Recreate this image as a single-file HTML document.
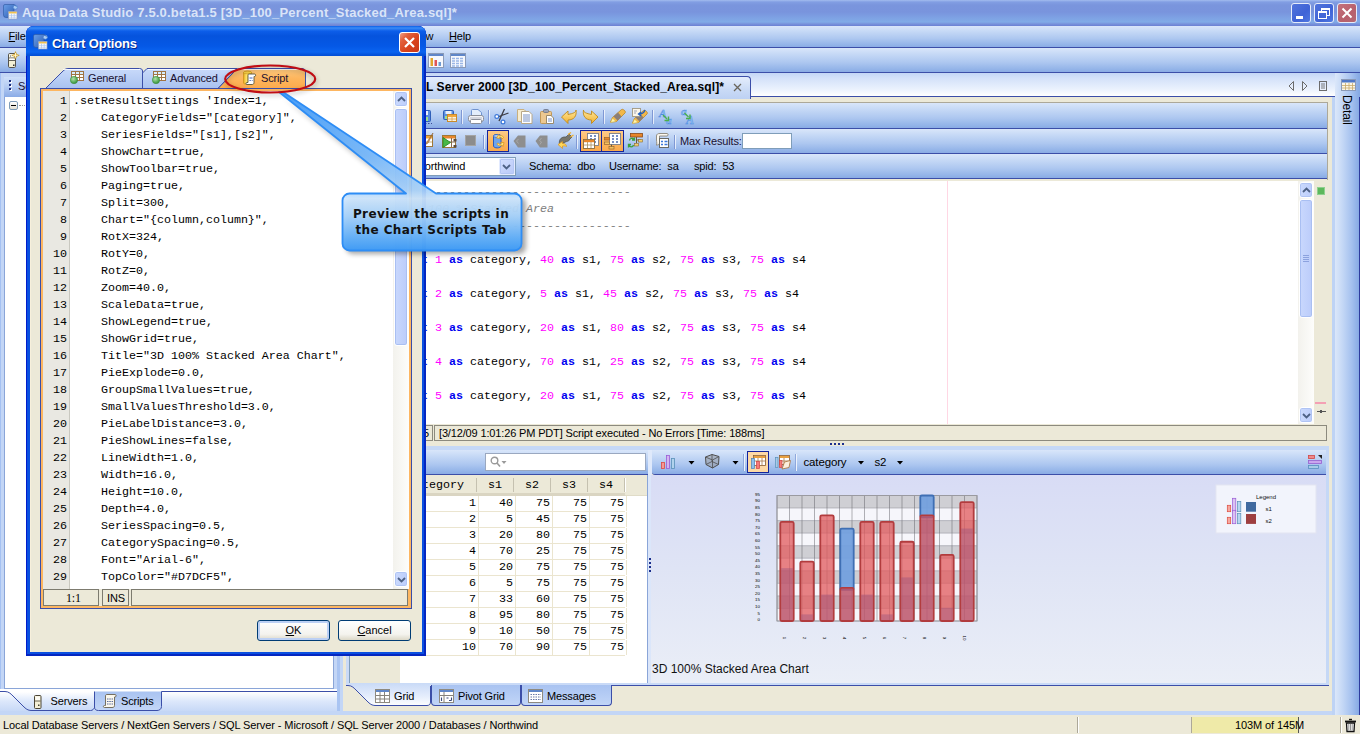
<!DOCTYPE html>
<html lang="en"><head><meta charset="utf-8"><title>Aqua Data Studio</title>
<style>
html,body{margin:0;padding:0}
body{width:1360px;height:734px;overflow:hidden;position:relative;background:#ece9d8;font-family:"Liberation Sans",sans-serif;font-size:11px;color:#000}
div,span,svg,b,i,u{position:absolute;box-sizing:border-box}
b.kw,span.nu,span.cm,.sl b,.sl span,.cl span{position:static}
u{position:static;text-decoration:underline}
.tb{background:linear-gradient(to bottom,#d9e6fa 0%,#c6d9f6 25%,#adc7f0 60%,#92b3e8 90%,#8aabe4 100%)}
.t{white-space:nowrap;line-height:14px;font-size:11px;letter-spacing:-0.15px}

/* title bar */
#title{left:0;top:0;width:1360px;height:26px;background:linear-gradient(to bottom,#a3bcee 0,#829ee3 2px,#7a95dd 5px,#7994dd 12px,#7ea2e4 18px,#80abe7 22px,#7892db 24px,#6b80d3 26px)}
#title .txt{left:22px;top:5px;font-weight:bold;font-size:13px;line-height:16px;color:#d9e4f8;white-space:nowrap;letter-spacing:0.19px}
.cap{top:3px;width:20px;height:20px;border-radius:3px;border:1px solid #e6ecfa}
#menubar{left:0;top:26px;width:1360px;height:22px;border-bottom:1px solid #3b4ea8}
#toolbar{left:0;top:48px;width:1360px;height:25px;border-bottom:1px solid #3b4ea8}
#work{left:0;top:73px;width:1360px;height:642px;background:#c3d6f6}

/* left panel */
#lphead{left:4px;top:77px;width:330px;height:20px;background:linear-gradient(to bottom,#cfe0fa,#b3caf2 50%,#8aabe6)}
#lpbody{left:4px;top:97px;width:330px;height:592px;background:#fff;border:1px solid #8aa5d8;border-top:none}
#lptabs{left:0;top:689px;width:337px;height:26px;background:linear-gradient(to bottom,#fff 0,#fff 3px,#dde8fb 12px,#c3d6f6 24px)}

/* right panel */
#rp{left:343px;top:73px;width:989px;height:638px;background:#ece9d8}
#rptabs{left:343px;top:73px;width:992px;height:24px;background:linear-gradient(to bottom,#c3d6f6 0,#d3e1f9 5px,#eaf1fd 16px,#fff 23px);border-bottom:1px solid #3b4ea8}
#rptab{left:343px;top:76px;width:408px;height:23px;background:linear-gradient(to bottom,#e4edfc,#c9daf6 60%,#bdd1f3);border:1px solid #3b4ea8;border-bottom:none;border-left:none;border-radius:0 4px 0 0}
#rptab .txt{right:26px;top:3px;font-weight:bold;font-size:12px;line-height:15px;white-space:nowrap;letter-spacing:0.1px}
.etb{left:346px;width:981px;height:25px;border-bottom:1px solid #3b4ea8}
#editor{left:346px;top:181px;width:952px;height:243px;background:#fff}
#sqltext{left:0;top:0;width:1299px;height:424px;overflow:hidden}
.sl{left:386px;height:17px;line-height:17px;font-family:"Liberation Mono",monospace;font-size:11.67px;white-space:pre;color:#000}
.kw{color:#0000f0;font-weight:bold}
.nu{color:#ff00ff}
.cm{color:#808080}
.ci{font-style:italic}
.vsb{width:16px;background:#f4f3ee}
.sbtn{left:1px;width:14px;height:16px;border:1px solid #fff;border-radius:3px;background:linear-gradient(to right,#cbdafd,#bccdfb);box-shadow:inset 0 0 0 1px #b0c4f4}
.thumb{left:1px;width:14px;border:1px solid #fff;border-radius:3px;background:linear-gradient(to right,#c9d8fd,#bbccfa);box-shadow:inset 0 0 0 1px #a9bff2}
#estat{left:346px;top:425px;width:981px;height:16px;background:#ece9d8}
.sbox{top:0;height:16px;border:1px solid #8c8a7e;background:#ece9d8}

/* results */
#rtb{left:346px;top:450px;width:302px;height:25px;border-bottom:1px solid #3b4ea8}
#gridwrap{left:349px;top:475px;width:299px;height:208px;background:#fff;border-right:1px solid #8aa5d8}
#grid{left:400px;top:475px;width:247px;height:208px;background:#fff;overflow:hidden}
.gh{top:0;height:21px;background:#ece9d8;border-bottom:3px solid #dad5c2}
.gh:after{content:'';position:absolute;right:0;top:3px;width:1px;height:14px;background:#c5c1b0;box-shadow:1px 0 0 #fff}
.gh span{top:3px;font-family:"Liberation Mono",monospace;font-size:11.67px;line-height:15px}
.gr{left:0;height:16px;width:225px;border-bottom:1px solid #ebe5cf}
.gc{top:0;height:15px;text-align:right;padding-right:2px;font-family:"Liberation Mono",monospace;font-size:11.67px;line-height:15px;border-right:1px solid #ebe5cf;box-sizing:content-box}
#ctb{left:652px;top:450px;width:674px;height:25px;border-radius:0 0 0 3px;border-bottom:1px solid #3b4ea8}
#chartbg{left:651px;top:475px;width:675px;height:208px;background:linear-gradient(to bottom,#d8dcf5,#dfe4f5 45%,#eaeef7)}
#chart{left:651px;top:475px}
#chart text{font-family:"Liberation Sans",sans-serif}
.ax{font-size:4.4px;fill:#000}
.lg{font-size:6px;fill:#111}
.ct{font-size:12px;fill:#111}
.obtn{border:1px solid #1a2c9c;background:#fdd9a6}

/* bottom tabs */
.btab{height:21px;border:1px solid #3b4ea8;border-top:none;border-radius:0 0 4px 4px;background:linear-gradient(to bottom,#a9c3f1,#c1d5f7)}

/* status */
#status{left:0;top:715px;width:1360px;height:19px;background:#ece9d8}
#status .txt{left:3px;top:3px;font-size:11px;line-height:14px;white-space:nowrap;letter-spacing:-0.1px}

/* dialog */
#dlg{left:26px;top:26px;width:400px;height:630px;border-radius:8px 8px 0 0;background:#0a4fe0;box-shadow:inset 1px 0 0 #001ccc,inset -2px 0 0 #0426c0,inset 0 -2px 0 #0426c0}
#dlgtitle{left:0;top:0;width:400px;height:30px;border-radius:8px 8px 0 0;background:linear-gradient(to bottom,#0a5fe8 0,#3a8cf6 2px,#0d5ee9 5px,#0553dd 10px,#0558e6 20px,#0a64f0 26px,#0350d8 29px)}
#dlgtitle .txt{left:26px;top:9.500px;letter-spacing:-0.13px;font-weight:bold;font-size:13px;line-height:16px;color:#fff;text-shadow:1px 1px 0 #0a2a8c;white-space:nowrap}
#dlgbody{left:4px;top:30px;width:392px;height:596px;background:#ece9d8;border-left:1px solid #f7f0dc}
#dlgcode{left:0;top:0;width:393px;height:589px;overflow:hidden}
.ln{left:43px;width:24px;height:17px;line-height:17px;text-align:right;font-family:"Liberation Mono",monospace;font-size:11.67px;color:#000}
.cl{left:73px;height:17px;line-height:17px;font-family:"Liberation Mono",monospace;font-size:11.67px;white-space:pre;color:#000}
.xbtn{width:73px;height:21px;border:1px solid #003c74;border-radius:3px;background:linear-gradient(to bottom,#fff,#f4f3ee 70%,#dcd8c8);text-align:center;line-height:18px;font-size:11px}

</style></head>
<body>
<!-- ===== main window title ===== -->
<div id="title">
  <svg style="left:3px;top:3px" width="17" height="17" viewBox="0 0 17 17">
      <defs><linearGradient id="ib1" x1="0" y1="0" x2="1" y2="1"><stop offset="0" stop-color="#6a9ee8"/><stop offset="1" stop-color="#2f5fb4"/></linearGradient></defs>
      <path d="M0.500 3Q0.500 1.500 2 1.500H11V9H5.500V14.500H3Q0.500 14.500 0.500 12Z" fill="url(#ib1)" stroke="#2c569f" stroke-width="0.600"/>
      <circle cx="12.300" cy="4.200" r="2.100" fill="#a9cdf6" stroke="#4a7fd0" stroke-width="0.700"/><path d="M11 1.600L13.500 3.500" stroke="#2f5fb4" stroke-width="0.800"/>
      <rect x="5.500" y="8.500" width="8.500" height="7.500" fill="#fff" stroke="#8c9cc0" stroke-width="0.700"/>
      <rect x="5.800" y="8.800" width="7.900" height="1.700" fill="#f2c24e"/>
      <path d="M5.800 12.300H13.700M5.800 14.200H13.700M8.500 10.500V15.700M11.200 10.500V15.700" stroke="#a9c4ec" stroke-width="0.700"/>
    </svg>
  <div class="txt">Aqua Data Studio 7.5.0.beta1.5 [3D_100_Percent_Stacked_Area.sql]*</div>
  <div class="cap" style="left:1291px;background:linear-gradient(135deg,#5274dc,#3f63d6 60%,#4f78e2)"><div style="left:4px;top:12px;width:7px;height:3px;background:#fff"></div></div>
  <div class="cap" style="left:1314px;background:linear-gradient(135deg,#5274dc,#3f63d6 60%,#4f78e2)">
    <div style="left:6px;top:4px;width:9px;height:8px;border:1px solid #fff;border-top-width:2px"></div>
    <div style="left:3px;top:7px;width:9px;height:8px;border:1px solid #fff;border-top-width:2px;background:#4468d8"></div>
  </div>
  <div class="cap" style="left:1337px;background:linear-gradient(135deg,#c4727c,#b8606c 60%,#b46874)">
    <svg style="left:3px;top:3px" width="12" height="12" viewBox="0 0 12 12"><path d="M1.5 1.5L10.5 10.5M10.5 1.5L1.5 10.5" stroke="#fff" stroke-width="2"/></svg>
  </div>
</div>

<!-- ===== menu bar ===== -->
<div id="menubar" class="tb">
  <div class="t" style="left:8.500px;top:3px"><u>F</u>ile</div>
  <div class="t" style="left:395px;top:3px"><u>W</u>indow</div>
  <div class="t" style="left:449px;top:3px"><u>H</u>elp</div>
</div>

<!-- ===== main toolbar ===== -->
<div id="toolbar" class="tb">
  <svg style="left:7px;top:3px" width="16" height="18" viewBox="0 0 16 18">
    <rect x="1.500" y="2.500" width="7" height="14" rx="1.200" fill="#f3f0d4" stroke="#55534c"/>
    <rect x="2.500" y="3.500" width="5" height="3" fill="#fbfaf0"/><path d="M2 7H8M2 9.500H8" stroke="#55534c" stroke-width="0.900"/><rect x="2.500" y="7.500" width="5" height="1.500" fill="#fff"/><rect x="6" y="13.500" width="1.500" height="1.500" fill="#333"/><rect x="3" y="4.500" width="1" height="1" fill="#555"/>
    <path d="M8.500 0.500L9.600 3.200L12.300 4.300L9.600 5.400L8.500 8.100L7.400 5.400L4.700 4.300L7.400 3.200Z" fill="#d9a520" stroke="#b8860b" stroke-width="0.400"/><path d="M8.500 2V6.600M6.200 4.300H10.800" stroke="#fff8d8" stroke-width="0.900"/>
  </svg>
  <svg style="left:428px;top:5px" width="16" height="15" viewBox="0 0 16 15">
    <rect x="0.5" y="0.5" width="15" height="14" fill="#f6f8fd" stroke="#8a9ab8"/><rect x="1" y="1" width="14" height="2" fill="#5f86c8"/>
    <rect x="2.5" y="5" width="2.5" height="8" fill="#e2a52e"/><rect x="6.5" y="7" width="2.5" height="6" fill="#e05656"/><rect x="10.5" y="9" width="2.5" height="4" fill="#6f9bd2"/>
  </svg>
  <svg style="left:450px;top:5px" width="16" height="15" viewBox="0 0 16 15">
    <rect x="0.5" y="0.5" width="15" height="14" fill="#f6f8fd" stroke="#8a9ab8"/><rect x="1" y="1" width="14" height="2" fill="#5f86c8"/>
    <path d="M2 5.5H14M2 8H14M2 10.5H14M2 13H14" stroke="#9bb6e6" stroke-width="1.4" stroke-dasharray="3 1"/>
  </svg>
</div>

<div id="work"></div>
<div style="left:0;top:73px;width:1px;height:642px;background:#a5c1f2"></div>

<!-- ===== left panel ===== -->
<div id="lphead">
  <div style="left:5px;top:3px;width:2px;height:2px;background:#1c2e7c;box-shadow:0 4px 0 #1c2e7c,0 8px 0 #1c2e7c,1px 1px 0 #fff,1px 5px 0 #fff,1px 9px 0 #fff"></div>
  <div class="t" style="left:14px;top:2px;color:#1a1030">Servers</div>
</div>
<div id="lpbody">
  <div style="left:4px;top:4px;width:9px;height:9px;border:1px solid #7f9db9;border-radius:2px;background:linear-gradient(to bottom,#fff,#e4dfd2)"><div style="left:1px;top:3px;width:5px;height:1px;background:#000"></div></div>
  <div style="left:14px;top:8px;width:6px;height:1px;border-top:1px dotted #999"></div>
</div>
<div id="lptabs">
  <svg style="left:0;top:0" width="337" height="26" viewBox="0 0 337 26">
    <path d="M94.500 2.500V18C94.500 20.500 96 21.500 98.500 21.500H157C159.500 21.500 161.500 20 161.500 17.500V2.500Z" fill="url(#stg)"/>
    <defs><linearGradient id="stg" x1="0" y1="0" x2="0" y2="1"><stop offset="0" stop-color="#a9c3f1"/><stop offset="1" stop-color="#c3d6f7"/></linearGradient></defs>
    <path d="M0 2.500H5C9 2.500 11 5 14 8L24 18C27 21 29 21.500 32 21.500H90.500C93 21.500 93.500 20 94.500 18.500" fill="none" stroke="#3b4ea8" stroke-width="1"/>
    <path d="M94.500 2.500V18C94.500 20.500 96 21.500 98.500 21.500H157C159.500 21.500 161.500 20 161.500 17.500V2.500H337" fill="none" stroke="#3b4ea8" stroke-width="1"/>
    <rect x="34.500" y="6.500" width="6.500" height="13" rx="1" fill="#f4efd6" stroke="#4a4434"/><rect x="35.500" y="7.500" width="4.500" height="4" fill="#fdfcf4"/><path d="M35 12H40.500" stroke="#4a4434" stroke-width="0.800"/><rect x="38" y="15.500" width="1.500" height="1.500" fill="#443"/>
    <path d="M105.500 7C105.500 6 106 5.500 107 5.500H115C116.500 5.500 116.500 8 115 8H114.500V16.500C114.500 18 113.500 18.500 112 18.500H104.500C103 18.500 103 16.500 104.500 16.500H105.500Z" fill="#fbf8ee" stroke="#6a6250" stroke-width="0.900"/><path d="M107 10H113M107 12.500H113M107 15H113" stroke="#5a6a9a" stroke-width="1" stroke-dasharray="1.500 0.800"/>
  </svg>
  <div class="t" style="left:50.500px;top:5px">Servers</div>
  <div class="t" style="left:121px;top:5px">Scripts</div>
</div>
<!-- splitter between panels -->
<div style="left:337px;top:73px;width:3px;height:642px;background:#a9c4f2"></div>

<!-- ===== right panel ===== -->
<div id="rp"></div>
<div style="left:343px;top:711px;width:1017px;height:4px;background:#c3d6f6"></div>
<div style="left:0;top:711px;width:343px;height:4px;background:#c3d6f6"></div>
<div id="rptabs">
  <svg style="left:944px;top:7px" width="40" height="12" viewBox="0 0 40 12">
    <path d="M6.500 1.500V10.500L2 6Z M15.500 1.500V10.500L20 6Z" fill="none" stroke="#6c6c6c" stroke-width="1"/>
    <rect x="32.500" y="1.500" width="7" height="9" fill="none" stroke="#6c6c6c"/><path d="M34 4H38M34 6H38M34 8H38" stroke="#6c6c6c" stroke-width="0.9"/>
  </svg>
</div>
<div id="rptab"><div class="txt">SQL Server 2000 [3D_100_Percent_Stacked_Area.sql]*</div>
  <svg style="left:390px;top:6px" width="9" height="9" viewBox="0 0 9 9"><path d="M1 1L8 8M8 1L1 8" stroke="#6a665c" stroke-width="1.3"/></svg>
</div>
<div style="left:343px;top:99px;width:989px;height:4px;background:#ece9d8"></div>
<div style="left:346px;top:102px;width:982px;height:1px;background:#aca899"></div>
<div style="left:1327px;top:102px;width:1px;height:78px;background:#aca899"></div>

<!-- detail side strip -->
<div style="left:1335px;top:73px;width:25px;height:642px;background:linear-gradient(to right,#dbe7fa 0,#c6d9f6 28%,#a6c2ef 65%,#87aae4 96%,#87aae4 100%)">
  <div style="left:24px;top:24px;width:1px;height:618px;background:#2e3c9e"></div>
  <svg style="left:6px;top:6px" width="15" height="12" viewBox="0 0 15 12"><rect x="0.5" y="0.5" width="14" height="11" fill="#fbf6e6" stroke="#8a9ab8"/><rect x="1" y="1" width="13" height="2.500" fill="#4f78c8"/><path d="M1 6.500H14M1 9H14M4.500 4V11M8 4V11M11.500 4V11" stroke="#c8aa6a" stroke-width="0.8"/></svg>
  <div class="t" style="left:19px;top:22px;transform:rotate(90deg);transform-origin:0 0;font-size:12px">Detail</div>
</div>
<div style="left:1332px;top:97px;width:3px;height:618px;background:#bed3f5"></div>

<!-- editor toolbars -->
<div class="etb tb" style="top:103px;height:26px"></div>
<div class="etb tb" style="top:129px"></div>
<div class="etb tb" style="top:154px"></div>
<svg style="left:410px;top:103px" width="300" height="51" viewBox="410 103 300 51">
  <defs>
    <linearGradient id="ob" x1="0" y1="0" x2="0" y2="1"><stop offset="0" stop-color="#fdcb8a"/><stop offset="0.5" stop-color="#fbb762"/><stop offset="1" stop-color="#faa94c"/></linearGradient>
    <linearGradient id="ya" x1="0" y1="0" x2="0" y2="1"><stop offset="0" stop-color="#ffe9a0"/><stop offset="1" stop-color="#f2b02c"/></linearGradient>
  </defs>
  <g stroke="#fff" stroke-opacity="0.7">
    <path d="M462.500 110V124M489.500 110V124M604.500 110V124M653.500 110V124M484.500 135V149M577.500 135V149M649 135V149M675.500 135V149"/>
  </g>
  <g stroke="#7f98d4">
    <path d="M461.500 110V124M488.500 110V124M603.500 110V124M652.500 110V124M483.500 135V149M576.500 135V149M648 135V149M674.500 135V149"/>
  </g>
  <!-- row 1 -->
  <rect x="418.500" y="110.500" width="12" height="11" rx="1" fill="#5a8ee0" stroke="#2f5fb8"/><rect x="421" y="111" width="7" height="4" fill="#e8f0fc"/><rect x="422" y="117" width="6" height="4" fill="#9fe08a"/>
  <path d="M419 123.500H432" stroke="#3a4a9a" stroke-dasharray="1.500 1.500"/>
  <rect x="443.500" y="110.500" width="10" height="9" rx="1" fill="#5a8ee0" stroke="#2f5fb8"/><rect x="445.500" y="111" width="6" height="3" fill="#e8f0fc"/><rect x="445" y="116" width="3" height="3" fill="#9fe08a"/>
  <rect x="447.500" y="114.500" width="9" height="7" fill="#fdf4dc" stroke="#c88a2c"/><rect x="448" y="115" width="8" height="2" fill="#f2a83a"/><path d="M448 119H456M452 117V121" stroke="#d8a050" stroke-width="0.8"/>
  <path d="M471.500 116V110.500C471.500 109.500 472 109.500 472.500 109.500H478L481.500 112.500V116Z" fill="#e3eefc" stroke="#6f93d0"/>
  <rect x="468.500" y="115.500" width="15" height="6" rx="2" fill="#f4f4f6" stroke="#8a8e98"/><rect x="470.500" y="119.500" width="11" height="4" rx="1" fill="#fff" stroke="#8a8e98"/><path d="M470 118H482" stroke="#b4b8c4"/>
  <path d="M504.500 109L499 121M508.500 113L497.500 117" stroke="#3c3c44" stroke-width="1.300" fill="none"/><circle cx="496.800" cy="116.500" r="1.900" fill="#fff" stroke="#3c78d8" stroke-width="1.200"/><circle cx="503" cy="122" r="1.900" fill="#fff" stroke="#3c78d8" stroke-width="1.200"/>
  <path d="M517.500 109.500H524L526.500 112V121.500H517.500Z" fill="#f6ecd0" stroke="#c8b080"/><path d="M521.500 111.500H529L532 114.500V123.500H521.500Z" fill="#fff" stroke="#b8a888"/><path d="M523 115H530M523 117H530M523 119H530M523 121H530" stroke="#6a86c0" stroke-width="0.9"/>
  <rect x="540.500" y="111.500" width="11" height="12" rx="1" fill="#ecc890" stroke="#c09858"/><rect x="543.500" y="109.500" width="5" height="3" rx="1" fill="#9aa2b4" stroke="#6a7286" stroke-width="0.8"/><path d="M546.500 115.500H551L553.500 118V123.500H546.500Z" fill="#fff" stroke="#9a8a6a"/><path d="M548 119H552M548 121H552" stroke="#6a86c0" stroke-width="0.9"/>
  <path d="M561.500 117L568 111V114.500C573 113.500 576 112.500 576 110C577 116 574 120 568 120V123.500Z" fill="url(#ya)" stroke="#c08a1c" stroke-width="0.9"/>
  <path d="M598 117L591.500 111V114.500C586.500 113.500 583.500 112.500 583.500 110C582.500 116 585.500 120 591.500 120V123.500Z" fill="url(#ya)" stroke="#c08a1c" stroke-width="0.9"/>
  <g><path d="M610.500 122L612.500 117.500L621.500 109.500C623 108.500 626.500 111.500 625 113L616.500 121.500Z" fill="#f2b84a" stroke="#b8862c" stroke-width="0.8"/><path d="M613.500 116.500L618 112.500L621.500 116.500L617.500 120.500Z" fill="#8a7e78"/><path d="M610.500 122.500L612.500 118L616 121.500Z" fill="#fff6b0" stroke="#d8b040" stroke-width="0.600"/></g>
  <g transform="translate(22,1)"><path d="M610.500 122L612.500 117.500L621.500 109.500C623 108.500 626.500 111.500 625 113L616.500 121.500Z" fill="#f2b84a" stroke="#b8862c" stroke-width="0.8"/><path d="M613.500 116.500L618 112.500L621.500 116.500L617.500 120.500Z" fill="#8a7e78"/><path d="M610.500 122.500L612.500 118L616 121.500Z" fill="#fff6b0" stroke="#d8b040" stroke-width="0.600"/></g><rect x="632.500" y="108.500" width="8" height="8" fill="#fbf6ea" stroke="#a09880" stroke-width="0.9"/><path d="M634 111H637M634 113H636" stroke="#8890a8" stroke-width="0.8"/><path d="M645 110C644 113 642 114 639 114M641 112L638.500 114L641 116" stroke="#1f5fc0" stroke-width="1.300" fill="none"/>
  <text x="659" y="117" font-size="11" font-style="italic" font-weight="bold" fill="#8cbcf4" stroke="#4a8ae0" stroke-width="0.400" font-family="Liberation Serif,serif">A</text><text x="666" y="124" font-size="11" font-style="italic" font-weight="bold" fill="#8cbcf4" stroke="#4a8ae0" stroke-width="0.400" font-family="Liberation Serif,serif">a</text><path d="M663 115L667 119M668.500 116.500V120.500H664.500" stroke="#4cb04c" stroke-width="1.400" fill="none"/>
  <text x="681" y="115" font-size="11" font-style="italic" font-weight="bold" fill="#8cbcf4" stroke="#4a8ae0" stroke-width="0.400" font-family="Liberation Serif,serif">a</text><text x="686" y="124" font-size="12" font-style="italic" font-weight="bold" fill="#8cbcf4" stroke="#4a8ae0" stroke-width="0.400" font-family="Liberation Serif,serif">A</text><path d="M684.500 113L688.500 117M690 114.500V118.500H686" stroke="#4cb04c" stroke-width="1.400" fill="none"/>
  <!-- row 2 -->
  <rect x="418.500" y="135.500" width="14" height="11" fill="#fff" stroke="#a07838"/><rect x="419" y="136" width="13" height="2.500" fill="#f2a83a"/><path d="M419 142H432M425.500 138V146" stroke="#c8a468" stroke-width="0.9"/><path d="M433 133L427 142L425.500 144.500L428 143Z" fill="#e8a860" stroke="#8a5a2a" stroke-width="0.600"/>
  <rect x="442.500" y="135.500" width="13" height="12" fill="#fff" stroke="#a07838"/><rect x="443" y="136" width="12" height="2.500" fill="#e8862a"/><path d="M449 142H456M451.500 138V147" stroke="#8a6a4a" stroke-width="1"/><rect x="453.500" y="139" width="3" height="2.500" fill="#5a4a3a"/><rect x="453.500" y="145" width="3" height="2.500" fill="#5a4a3a"/>
  <path d="M443 137.500L450.500 142.500L443 147.500Z" fill="#48b848" stroke="#2a8a2a" stroke-width="0.9"/>
  <rect x="465.500" y="135.500" width="10" height="10" fill="#8c8c8c" stroke="#a4a4a4"/>
  <rect x="487.500" y="130.500" width="21" height="21" fill="url(#ob)" stroke="#14249c"/>
  <path d="M493.500 136C493.500 134 501 134 501 136V146C501 148.500 493.500 148.500 493.500 146Z" fill="#6ea4ec" stroke="#2a5cc0"/><ellipse cx="497.200" cy="136" rx="3.700" ry="1.500" fill="#b4d2f8" stroke="#2a5cc0" stroke-width="0.700"/>
  <path d="M503.500 137.500C503 135.500 500.500 135 499 136L498.500 134.500L496.500 138L500 138.500L499.500 137.500C500.500 137 502 137.500 502 139Z M497 143.500C497.500 146 500.500 146.500 502 145L503 146.500L504 142.500L500.500 142.500L501.300 143.800C500 144.800 498.500 144 498.500 143Z" fill="#ffe27a" stroke="#d8921c" stroke-width="0.700"/>
  <path d="M513.500 141L518 135.500H525.500V147.500H518Z" fill="#8e8e8e"/><path d="M518.500 139L516.500 141L518.500 143.500" stroke="#a8a8a8" fill="none"/>
  <path d="M535.500 141L540 135.500H547.500V147.500H540Z" fill="#8e8e8e"/><path d="M541.500 138L539.500 140.500L541.500 142L540 144.500" stroke="#a8a8a8" fill="none"/>
  <path d="M559.500 144C558.500 139 562 136.500 566 137L569 134L572 137L569 140C569.500 141.500 566 141 564 143Z" fill="#77766c" stroke="#4a4a44" stroke-width="0.700"/><path d="M568 134.500L571 132.500M570.500 137L573.500 135" stroke="#f2b02c" stroke-width="1.400"/>
  <path d="M558 144.500L562.500 141.500V143.500C565 143.500 566.500 144.500 566.500 146.500C565.500 145.800 564 145.800 562.500 146V148.500Z" fill="#ffd85a" stroke="#d8921c" stroke-width="0.700"/>
  <rect x="580.500" y="130.500" width="21" height="21" fill="url(#ob)" stroke="#14249c"/><rect x="601.500" y="130.500" width="22" height="21" fill="url(#ob)" stroke="#14249c"/>
  <rect x="587.500" y="133.500" width="11" height="12" fill="#fff" stroke="#7a7e8c" stroke-width="0.9"/><path d="M590 136H592M594 136H596M590 139H592M594 139H596M590 142H592M594 142H596" stroke="#4a6ab0" stroke-width="1.300"/>
  <rect x="583.500" y="139.500" width="11" height="9" fill="#fff" stroke="#8a6a3a" stroke-width="0.9"/><rect x="584" y="140" width="10" height="2.200" fill="#e8862a"/><path d="M584 145H594M587.500 142V148M591 142V148" stroke="#a89060" stroke-width="0.800"/>
  <rect x="609.500" y="133.500" width="11" height="11" fill="#fff" stroke="#7a7e8c" stroke-width="0.9"/><path d="M612 136H614M616 136H618M612 139H614M616 139H618M612 142H614M616 142H618" stroke="#4a6ab0" stroke-width="1.300"/>
  <rect x="604.500" y="137.500" width="5" height="2.500" fill="#e8862a" stroke="#8a5a2a" stroke-width="0.600"/><rect x="604.500" y="142" width="5" height="2.500" fill="#f4c060" stroke="#8a5a2a" stroke-width="0.600"/><rect x="609" y="146.500" width="5" height="2.500" fill="#f4c060" stroke="#8a5a2a" stroke-width="0.600"/><path d="M611.500 144.500V146.500" stroke="#6a5a3a"/>
  <rect x="630.500" y="133.500" width="12" height="3.500" fill="#e8862a" stroke="#8a4a1a" stroke-width="0.800"/><path d="M636.500 137V143M636.500 140H641" stroke="#6a5a3a"/><rect x="638.500" y="139.500" width="4" height="2.500" fill="#f4d070" stroke="#8a6a2a" stroke-width="0.600"/><rect x="634.500" y="143.500" width="4" height="2.500" fill="#f4d070" stroke="#8a6a2a" stroke-width="0.600"/>
  <path d="M629.500 140.500C629.500 138 633 137.500 634 139.500M634.500 137.500V140H632M633.500 145C633 147.500 629.500 147.500 629 145M628.500 147.500V144.500H631" stroke="#3ea03e" stroke-width="1.300" fill="none"/>
  <path d="M656.500 136C656.500 134 658 133.500 660 133.500H667C668.500 133.500 668.500 136 667 136H659.500V143C659.500 144.500 658 145 656 145C657.500 144.500 656.500 142 656.500 140Z" fill="#fbf8f0" stroke="#8a8478" stroke-width="0.900"/>
  <rect x="659.500" y="138.500" width="9" height="9" fill="#fff" stroke="#6a6a64"/><path d="M661 141.500H663M664.500 141.500H667.500M661 144.500H663M664.500 144.500H667.500" stroke="#3c78d8" stroke-width="1.500"/>
</svg>
<div class="t" style="left:680px;top:134px;color:#1a1030">Max Results:</div>
<div style="left:742px;top:133px;width:50px;height:16px;background:#fff;border:1px solid #7f9db9"></div>
<div style="left:386px;top:157px;width:130px;height:19px;background:#fff;border:1px solid #7f9db9"></div>
<div class="t" style="left:417px;top:159px">Northwind</div>
<div style="left:499px;top:158px;width:16px;height:17px;border:1px solid #e2eaff;border-radius:2px;background:linear-gradient(135deg,#d2defe,#b9c9f8);box-shadow:inset 0 0 0 1px #b4c6f4"><svg style="left:1.500px;top:5px" width="9" height="6" viewBox="0 0 9 6"><path d="M1 1L4.500 4.500L8 1" stroke="#4d6185" stroke-width="1.800" fill="none"/></svg></div>
<div class="t" style="left:529px;top:159px;word-spacing:3px">Schema: dbo</div>
<div class="t" style="left:609px;top:159px;word-spacing:3px">Username: sa</div>
<div class="t" style="left:694px;top:159px;word-spacing:3px">spid: 53</div>
<div style="left:346px;top:179px;width:981px;height:2px;background:#ece9d8"></div>

<!-- editor -->
<div id="editor"></div>
<div style="left:947px;top:181px;width:1px;height:243px;background:#ffd7e4"></div>
<div class="vsb" style="left:1298px;top:181px;height:243px;background:linear-gradient(to right,#f3f2ed,#fdfdfb)">
  <div class="sbtn" style="top:1px"><svg style="left:1.500px;top:4px" width="9" height="6" viewBox="0 0 9 6"><path d="M1 5L4.500 1.500L8 5" stroke="#4d6185" stroke-width="1.800" fill="none"/></svg></div>
  <div class="thumb" style="top:18px;height:119px"><div style="left:3px;top:55px;width:6px;height:1px;background:#8ca2de;box-shadow:0 2px 0 #8ca2de,0 4px 0 #8ca2de,0 6px 0 #8ca2de"></div></div>
  <div class="sbtn" style="top:226px"><svg style="left:1.500px;top:5px" width="9" height="6" viewBox="0 0 9 6"><path d="M1 1L4.500 4.500L8 1" stroke="#4d6185" stroke-width="1.800" fill="none"/></svg></div>
</div>
<div style="left:1314px;top:181px;width:13px;height:243px;background:#ece9d8">
  <div style="left:3px;top:6px;width:8px;height:8px;background:#5cb85c;border:1px solid #8fd08f"></div>
  <div style="left:1px;top:221px;width:11px;height:2px;background:#f4a0b4"></div>
  <div style="left:3px;top:230px;width:9px;height:1px;background:#555"></div><div style="left:6px;top:229px;width:2px;height:3px;background:#555"></div>
</div>

<!-- editor status line -->
<div id="estat">
  <div class="sbox" style="left:60px;width:27px;overflow:hidden"><div class="t" style="right:3px;top:0px">13:55</div></div>
  <div class="sbox" style="left:88px;width:893px"><div class="t" style="left:4px;top:0px">[3/12/09 1:01:26 PM PDT] Script executed - No Errors [Time: 188ms]</div></div>
</div>
<div style="left:346px;top:446px;width:983px;height:4px;background:#c5d8f6"></div>
<div style="left:830px;top:443px;width:2px;height:2px;background:#1c2e8c;box-shadow:4px 0 0 #1c2e8c,8px 0 0 #1c2e8c,12px 0 0 #1c2e8c"></div>

<!-- results: grid side -->
<div id="rtb" class="tb">
  <div style="left:139px;top:3px;width:161px;height:18px;background:#fff;border:1px solid #9aa8c0"></div>
  <svg style="left:144px;top:6px" width="18" height="12" viewBox="0 0 18 12"><circle cx="4.500" cy="4.500" r="3.300" fill="none" stroke="#9a9a9a" stroke-width="1.400"/><path d="M7 7L10 10.500" stroke="#9a9a9a" stroke-width="1.600"/><path d="M11.500 5H16.500L14 8Z" fill="#9a9a9a"/></svg>
</div>
<div style="left:346px;top:475px;width:3px;height:208px;background:#c9daf7"></div>
<div id="gridwrap"><div style="left:0;top:0;width:51px;height:208px;background:#ece9d8"></div><div style="left:0;top:0;width:1px;height:208px;background:#7f9db9"></div></div>
<div style="left:648px;top:475px;width:3px;height:208px;background:#dbe6fa"></div>
<div style="left:648px;top:450px;width:4px;height:25px;background:#dfe9fb"></div>
<div style="left:649px;top:558px;width:2px;height:2px;background:#1c2e8c;box-shadow:0 4px 0 #1c2e8c,0 8px 0 #1c2e8c,0 12px 0 #1c2e8c"></div>

<!-- results: chart side -->
<div id="ctb" class="tb"></div>
<svg style="left:652px;top:450px" width="260" height="25" viewBox="652 450 260 25">
  <rect x="661.500" y="462.500" width="3" height="6" fill="#f59a94" stroke="#dc4a44" stroke-width="0.800"/><rect x="666.500" y="455.500" width="3" height="13" fill="#d3b4f0" stroke="#9a5cd6" stroke-width="0.800"/><rect x="671.500" y="458.500" width="3" height="10" fill="#b0d2ec" stroke="#5a90b8" stroke-width="0.800"/>
  <path d="M688.500 461H694.500L691.500 464.500Z M732.500 461H738.500L735.500 464.500Z M858 461H864L861 464.500Z M897 461H903L900 464.500Z" fill="#000"/>
  <path d="M705.500 457L712 454.500L719 456.500L718.500 464.500L712.500 468L706 464.500Z" fill="#8c8c8c" fill-opacity="0.450" stroke="#4e4e4e" stroke-width="1"/><path d="M705.500 457L712.500 460L719 456.500M712.500 460V468M706 464.500L712 461.500L718.500 464.500M712 454.500V461.500" fill="none" stroke="#4e4e4e" stroke-width="0.800"/>
  <path d="M743.500 454V471M795.500 454V471" stroke="#8fa8dc"/><path d="M744.500 454V471M796.500 454V471" stroke="#edf3fd"/>
  <rect x="747.500" y="451.500" width="21" height="21" fill="#fdd9a6" stroke="#14249c"/>
  <rect x="753.500" y="455.500" width="12" height="10" fill="#fff" stroke="#8a5a2a" stroke-width="0.800"/><rect x="754" y="456" width="11" height="2" fill="#e8a040"/><path d="M754 461H765M758 458V465M762 458V465" stroke="#a87a4a" stroke-width="0.800"/>
  <rect x="751.500" y="458.500" width="3" height="10" fill="#8cc0ec" stroke="#4a80b8" stroke-width="0.700"/><rect x="756.500" y="461.500" width="3" height="7" fill="#f47a7a" stroke="#d04444" stroke-width="0.700"/>
  <rect x="779.500" y="455.500" width="10" height="9" fill="#fff" stroke="#8a5a2a" stroke-width="0.800"/><rect x="780" y="456" width="9" height="2" fill="#e8a040"/><path d="M780 461H789M784 458V464" stroke="#a87a4a" stroke-width="0.800"/>
  <rect x="775.500" y="457.500" width="2.500" height="10" fill="#a8cbe8" stroke="#5a90b8" stroke-width="0.700"/><rect x="779.500" y="460.500" width="2.500" height="7" fill="#f47a7a" stroke="#d04444" stroke-width="0.700"/>
  <path d="M782 469L784.500 462L790.500 460.500L789 467.500Z" fill="#fbeedd" stroke="#a8703a" stroke-width="0.800"/>
</svg>
<div class="t" style="left:803.500px;top:455px;font-size:11.500px">category</div>
<div class="t" style="left:874.500px;top:455px;font-size:11.500px">s2</div>
<svg style="left:1307px;top:454px" width="16" height="16" viewBox="0 0 16 16"><rect x="1.500" y="1.500" width="6" height="3" fill="#f08a8a" stroke="#d04848" stroke-width="0.800"/><rect x="1.500" y="6.500" width="13" height="3" fill="#c9a6ee" stroke="#9660d0" stroke-width="0.800"/><rect x="1.500" y="11.500" width="10" height="3" fill="#a8cbe8" stroke="#5a8fc0" stroke-width="0.800"/><path d="M11 1H15V5Z" fill="#222"/></svg>
<div id="chartbg"></div>
<div style="left:1326px;top:450px;width:3px;height:236px;background:#c5d8f6"></div>

<!-- bottom tab strip of results -->
<div style="left:346px;top:683px;width:983px;height:3px;background:#c9daf7;border-bottom:1px solid #3b4ea8"></div>
<div style="left:346px;top:683px;width:86px;height:23px;background:linear-gradient(to bottom,#c9daf7,#e6eefc 60%,#fff)"></div>
<svg style="left:343px;top:683px" width="92" height="26" viewBox="0 0 92 26">
  <path d="M0 0H3V2.500H5C9 2.500 11 5 14 8L25 19C28 22 30 22.500 33 22.500H84C86.500 22.500 87.500 21 87.500 19V2.500H92V26H0Z" fill="#ece9d8"/>
  <path d="M3 2.500H5C9 2.500 11 5 14 8L25 19C28 22 30 22.500 33 22.500H84C86.500 22.500 87.500 21 87.500 19V3" fill="none" stroke="#3b4ea8"/>
</svg>
<div class="btab" style="left:431px;top:685px;width:90px"></div>
<div class="btab" style="left:521px;top:685px;width:91px"></div>
<svg style="left:375px;top:689px" width="230" height="16" viewBox="0 0 230 16">
  <rect x="0.500" y="0.500" width="14" height="13" fill="#fff" stroke="#8e8a80"/><rect x="1" y="1" width="13" height="2" fill="#5f86c8"/><path d="M1 6.500H14M1 10H14M5 3V13M9.500 3V13" stroke="#86827a" stroke-width="1"/>
  <rect x="64.500" y="0.500" width="14" height="13" fill="#fff" stroke="#8e8a80"/><rect x="65" y="1" width="13" height="2" fill="#5f86c8"/><path d="M69 3V13M65 6.500H78" stroke="#86827a"/><path d="M66.500 8.500V12M71.500 9H73.500M74 11.500H76.500M76.500 8.500V11.500" stroke="#3c4a7a" stroke-width="1.100"/>
  <rect x="153.500" y="0.500" width="14" height="13" fill="#fff" stroke="#8e8a80"/><rect x="154" y="1" width="13" height="2" fill="#5f86c8"/><path d="M155.500 5.500H166M155.500 8H166M155.500 10.500H166" stroke="#6a7aa8" stroke-width="1.100" stroke-dasharray="1.500 1"/>
</svg>
<div class="t" style="left:394px;top:689px">Grid</div>
<div class="t" style="left:458px;top:689px">Pivot Grid</div>
<div class="t" style="left:547px;top:689px">Messages</div>

<!-- ===== status bar ===== -->
<div id="status">
  <div class="txt">Local Database Servers / NextGen Servers / SQL Server - Microsoft / SQL Server 2000 / Databases / Northwind</div>
  <div style="left:1077px;top:2px;width:1px;height:16px;background:#aca899;box-shadow:1px 0 0 #fff"></div>
  <div style="left:1191px;top:2px;width:1px;height:16px;background:#aca899"></div>
  <div style="left:1192px;top:2px;width:107px;height:16px;background:#efeaa8"></div>
  <div style="left:1298px;top:2px;width:1px;height:16px;background:#555"></div>
  <div class="txt" style="left:1235px">103M of 145M</div>
  <div style="left:1340px;top:2px;width:1px;height:16px;background:#aca899;box-shadow:1px 0 0 #fff"></div>
  <svg style="left:1344px;top:3px" width="14" height="16" viewBox="0 0 14 16"><path d="M5 1.500H8" stroke="#111" stroke-width="1.400"/><path d="M1 3.500H12" stroke="#111" stroke-width="1.800"/><path d="M2.500 5H10.500L10 13.500H3Z" fill="#fff" stroke="#111" stroke-width="1.300"/><path d="M4.800 6V12.500M6.500 6V12.500M8.200 6V12.500" stroke="#888" stroke-width="0.900"/></svg>
</div>
<div id="sqltext">
<div class="sl" style="top:184px"><span class="cm">-----------------------------------</span></div>
<div class="sl" style="top:201px"><span class="cm ci">-- 3D 100 % Stacked Area</span></div>
<div class="sl" style="top:218px"><span class="cm">-----------------------------------</span></div>
<div class="sl" style="top:252px"><b class="kw">select</b> <span class="nu">1</span> <b class="kw">as</b> category, <span class="nu">40</span> <b class="kw">as</b> s1, <span class="nu">75</span> <b class="kw">as</b> s2, <span class="nu">75</span> <b class="kw">as</b> s3, <span class="nu">75</span> <b class="kw">as</b> s4</div>
<div class="sl" style="top:269px"><b class="kw">union</b></div>
<div class="sl" style="top:286px"><b class="kw">select</b> <span class="nu">2</span> <b class="kw">as</b> category, <span class="nu">5</span> <b class="kw">as</b> s1, <span class="nu">45</span> <b class="kw">as</b> s2, <span class="nu">75</span> <b class="kw">as</b> s3, <span class="nu">75</span> <b class="kw">as</b> s4</div>
<div class="sl" style="top:303px"><b class="kw">union</b></div>
<div class="sl" style="top:320px"><b class="kw">select</b> <span class="nu">3</span> <b class="kw">as</b> category, <span class="nu">20</span> <b class="kw">as</b> s1, <span class="nu">80</span> <b class="kw">as</b> s2, <span class="nu">75</span> <b class="kw">as</b> s3, <span class="nu">75</span> <b class="kw">as</b> s4</div>
<div class="sl" style="top:337px"><b class="kw">union</b></div>
<div class="sl" style="top:354px"><b class="kw">select</b> <span class="nu">4</span> <b class="kw">as</b> category, <span class="nu">70</span> <b class="kw">as</b> s1, <span class="nu">25</span> <b class="kw">as</b> s2, <span class="nu">75</span> <b class="kw">as</b> s3, <span class="nu">75</span> <b class="kw">as</b> s4</div>
<div class="sl" style="top:371px"><b class="kw">union</b></div>
<div class="sl" style="top:388px"><b class="kw">select</b> <span class="nu">5</span> <b class="kw">as</b> category, <span class="nu">20</span> <b class="kw">as</b> s1, <span class="nu">75</span> <b class="kw">as</b> s2, <span class="nu">75</span> <b class="kw">as</b> s3, <span class="nu">75</span> <b class="kw">as</b> s4</div>
</div>
<div id="grid">
<div style="left:0;top:0;width:247px;height:21px;background:#ece9d8;border-bottom:1px solid #e0dcc8"></div>
<div class="gh" style="left:0;width:77px"><span style="left:8px">category</span></div><div class="gh" style="left:77px;width:37px"><span style="left:11px">s1</span></div><div class="gh" style="left:114px;width:37px"><span style="left:11px">s2</span></div><div class="gh" style="left:151px;width:37px"><span style="left:11px">s3</span></div><div class="gh" style="left:188px;width:37px"><span style="left:11px">s4</span></div>
<div class="gr" style="top:21px"><span class="gc" style="left:0;width:76px">1</span><span class="gc" style="left:77px;width:36px">40</span><span class="gc" style="left:114px;width:36px">75</span><span class="gc" style="left:151px;width:36px">75</span><span class="gc" style="left:188px;width:36px">75</span></div>
<div class="gr" style="top:37px"><span class="gc" style="left:0;width:76px">2</span><span class="gc" style="left:77px;width:36px">5</span><span class="gc" style="left:114px;width:36px">45</span><span class="gc" style="left:151px;width:36px">75</span><span class="gc" style="left:188px;width:36px">75</span></div>
<div class="gr" style="top:53px"><span class="gc" style="left:0;width:76px">3</span><span class="gc" style="left:77px;width:36px">20</span><span class="gc" style="left:114px;width:36px">80</span><span class="gc" style="left:151px;width:36px">75</span><span class="gc" style="left:188px;width:36px">75</span></div>
<div class="gr" style="top:69px"><span class="gc" style="left:0;width:76px">4</span><span class="gc" style="left:77px;width:36px">70</span><span class="gc" style="left:114px;width:36px">25</span><span class="gc" style="left:151px;width:36px">75</span><span class="gc" style="left:188px;width:36px">75</span></div>
<div class="gr" style="top:85px"><span class="gc" style="left:0;width:76px">5</span><span class="gc" style="left:77px;width:36px">20</span><span class="gc" style="left:114px;width:36px">75</span><span class="gc" style="left:151px;width:36px">75</span><span class="gc" style="left:188px;width:36px">75</span></div>
<div class="gr" style="top:101px"><span class="gc" style="left:0;width:76px">6</span><span class="gc" style="left:77px;width:36px">5</span><span class="gc" style="left:114px;width:36px">75</span><span class="gc" style="left:151px;width:36px">75</span><span class="gc" style="left:188px;width:36px">75</span></div>
<div class="gr" style="top:117px"><span class="gc" style="left:0;width:76px">7</span><span class="gc" style="left:77px;width:36px">33</span><span class="gc" style="left:114px;width:36px">60</span><span class="gc" style="left:151px;width:36px">75</span><span class="gc" style="left:188px;width:36px">75</span></div>
<div class="gr" style="top:133px"><span class="gc" style="left:0;width:76px">8</span><span class="gc" style="left:77px;width:36px">95</span><span class="gc" style="left:114px;width:36px">80</span><span class="gc" style="left:151px;width:36px">75</span><span class="gc" style="left:188px;width:36px">75</span></div>
<div class="gr" style="top:149px"><span class="gc" style="left:0;width:76px">9</span><span class="gc" style="left:77px;width:36px">10</span><span class="gc" style="left:114px;width:36px">50</span><span class="gc" style="left:151px;width:36px">75</span><span class="gc" style="left:188px;width:36px">75</span></div>
<div class="gr" style="top:165px"><span class="gc" style="left:0;width:76px">10</span><span class="gc" style="left:77px;width:36px">70</span><span class="gc" style="left:114px;width:36px">90</span><span class="gc" style="left:151px;width:36px">75</span><span class="gc" style="left:188px;width:36px">75</span></div>
</div>
<svg id="chart" width="675" height="208" viewBox="0 0 675 208">
<rect x="126" y="20.5" width="200" height="12.55" fill="#cfcfd4"/><rect x="126" y="33.05" width="200" height="12.55" fill="#f6f6fb"/><rect x="126" y="45.6" width="200" height="12.55" fill="#cfcfd4"/><rect x="126" y="58.15" width="200" height="12.55" fill="#f6f6fb"/><rect x="126" y="70.7" width="200" height="12.55" fill="#cfcfd4"/><rect x="126" y="83.25" width="200" height="12.55" fill="#f6f6fb"/><rect x="126" y="95.8" width="200" height="12.55" fill="#cfcfd4"/><rect x="126" y="108.35" width="200" height="12.55" fill="#f6f6fb"/><rect x="126" y="120.9" width="200" height="12.55" fill="#cfcfd4"/><rect x="126" y="133.45" width="200" height="12.55" fill="#f6f6fb"/>
<line x1="126" y1="20.5" x2="126" y2="146" stroke="#55555c" stroke-width="0.45"/><line x1="138.5" y1="20.5" x2="138.5" y2="146" stroke="#55555c" stroke-width="0.45"/><line x1="151" y1="20.5" x2="151" y2="146" stroke="#55555c" stroke-width="0.45"/><line x1="163.5" y1="20.5" x2="163.5" y2="146" stroke="#55555c" stroke-width="0.45"/><line x1="176" y1="20.5" x2="176" y2="146" stroke="#55555c" stroke-width="0.45"/><line x1="188.5" y1="20.5" x2="188.5" y2="146" stroke="#55555c" stroke-width="0.45"/><line x1="201" y1="20.5" x2="201" y2="146" stroke="#55555c" stroke-width="0.45"/><line x1="213.5" y1="20.5" x2="213.5" y2="146" stroke="#55555c" stroke-width="0.45"/><line x1="226" y1="20.5" x2="226" y2="146" stroke="#55555c" stroke-width="0.45"/><line x1="238.5" y1="20.5" x2="238.5" y2="146" stroke="#55555c" stroke-width="0.45"/><line x1="251" y1="20.5" x2="251" y2="146" stroke="#55555c" stroke-width="0.45"/><line x1="263.5" y1="20.5" x2="263.5" y2="146" stroke="#55555c" stroke-width="0.45"/><line x1="276" y1="20.5" x2="276" y2="146" stroke="#55555c" stroke-width="0.45"/><line x1="288.5" y1="20.5" x2="288.5" y2="146" stroke="#55555c" stroke-width="0.45"/><line x1="301" y1="20.5" x2="301" y2="146" stroke="#55555c" stroke-width="0.45"/><line x1="313.5" y1="20.5" x2="313.5" y2="146" stroke="#55555c" stroke-width="0.45"/><line x1="326" y1="20.5" x2="326" y2="146" stroke="#55555c" stroke-width="0.45"/><line x1="126" y1="20.5" x2="326" y2="20.5" stroke="#77777e" stroke-width="0.4"/><line x1="126" y1="33.05" x2="326" y2="33.05" stroke="#77777e" stroke-width="0.4"/><line x1="126" y1="45.6" x2="326" y2="45.6" stroke="#77777e" stroke-width="0.4"/><line x1="126" y1="58.15" x2="326" y2="58.15" stroke="#77777e" stroke-width="0.4"/><line x1="126" y1="70.7" x2="326" y2="70.7" stroke="#77777e" stroke-width="0.4"/><line x1="126" y1="83.25" x2="326" y2="83.25" stroke="#77777e" stroke-width="0.4"/><line x1="126" y1="95.8" x2="326" y2="95.8" stroke="#77777e" stroke-width="0.4"/><line x1="126" y1="108.35" x2="326" y2="108.35" stroke="#77777e" stroke-width="0.4"/><line x1="126" y1="120.9" x2="326" y2="120.9" stroke="#77777e" stroke-width="0.4"/><line x1="126" y1="133.45" x2="326" y2="133.45" stroke="#77777e" stroke-width="0.4"/><line x1="126" y1="146" x2="326" y2="146" stroke="#77777e" stroke-width="0.4"/>
<rect x="126" y="20.5" width="200" height="125.5" fill="none" stroke="#9a9aa0" stroke-width="1"/>
<text x="109" y="146.2" class="ax" text-anchor="end">0</text><text x="109" y="139.595" class="ax" text-anchor="end">5</text><text x="109" y="132.989" class="ax" text-anchor="end">10</text><text x="109" y="126.384" class="ax" text-anchor="end">15</text><text x="109" y="119.779" class="ax" text-anchor="end">20</text><text x="109" y="113.174" class="ax" text-anchor="end">25</text><text x="109" y="106.568" class="ax" text-anchor="end">30</text><text x="109" y="99.9632" class="ax" text-anchor="end">35</text><text x="109" y="93.3579" class="ax" text-anchor="end">40</text><text x="109" y="86.7526" class="ax" text-anchor="end">45</text><text x="109" y="80.1474" class="ax" text-anchor="end">50</text><text x="109" y="73.5421" class="ax" text-anchor="end">55</text><text x="109" y="66.9368" class="ax" text-anchor="end">60</text><text x="109" y="60.3316" class="ax" text-anchor="end">65</text><text x="109" y="53.7263" class="ax" text-anchor="end">70</text><text x="109" y="47.1211" class="ax" text-anchor="end">75</text><text x="109" y="40.5158" class="ax" text-anchor="end">80</text><text x="109" y="33.9105" class="ax" text-anchor="end">85</text><text x="109" y="27.3053" class="ax" text-anchor="end">90</text><text x="109" y="20.7" class="ax" text-anchor="end">95</text>
<rect x="129.3" y="46.9211" width="13.4" height="99.0789" rx="1.5" fill="#e25c5e" fill-opacity="0.76" stroke="#b23c3e" stroke-width="1.8"/><rect x="130.2" y="93.1579" width="11.6" height="51.9421" fill="#96507c" fill-opacity="0.42"/>
<rect x="149.3" y="86.5526" width="13.4" height="59.4474" rx="1.5" fill="#e25c5e" fill-opacity="0.76" stroke="#b23c3e" stroke-width="1.8"/><rect x="150.2" y="139.395" width="11.6" height="5.70526" fill="#96507c" fill-opacity="0.42"/>
<rect x="169.3" y="40.3158" width="13.4" height="105.684" rx="1.5" fill="#e25c5e" fill-opacity="0.76" stroke="#b23c3e" stroke-width="1.8"/><rect x="170.2" y="119.579" width="11.6" height="25.5211" fill="#96507c" fill-opacity="0.42"/>
<rect x="189.3" y="53.5263" width="13.4" height="61.4474" rx="1.5" fill="#73a0de" fill-opacity="0.95" stroke="#3f6fb4" stroke-width="1.8"/><rect x="189.3" y="112.974" width="13.4" height="33.0263" rx="1.5" fill="#e25c5e" fill-opacity="0.76" stroke="#b23c3e" stroke-width="1.8"/><rect x="190.2" y="113.874" width="11.6" height="31.2263" fill="#96507c" fill-opacity="0.42"/>
<rect x="209.3" y="46.9211" width="13.4" height="99.0789" rx="1.5" fill="#e25c5e" fill-opacity="0.76" stroke="#b23c3e" stroke-width="1.8"/><rect x="210.2" y="119.579" width="11.6" height="25.5211" fill="#96507c" fill-opacity="0.42"/>
<rect x="229.3" y="46.9211" width="13.4" height="99.0789" rx="1.5" fill="#e25c5e" fill-opacity="0.76" stroke="#b23c3e" stroke-width="1.8"/><rect x="230.2" y="139.395" width="11.6" height="5.70526" fill="#96507c" fill-opacity="0.42"/>
<rect x="249.3" y="66.7368" width="13.4" height="79.2632" rx="1.5" fill="#e25c5e" fill-opacity="0.76" stroke="#b23c3e" stroke-width="1.8"/><rect x="250.2" y="102.405" width="11.6" height="42.6947" fill="#96507c" fill-opacity="0.42"/>
<rect x="269.3" y="20.5" width="13.4" height="21.8158" rx="1.5" fill="#73a0de" fill-opacity="0.95" stroke="#3f6fb4" stroke-width="1.8"/><rect x="269.3" y="40.3158" width="13.4" height="105.684" rx="1.5" fill="#e25c5e" fill-opacity="0.76" stroke="#b23c3e" stroke-width="1.8"/><rect x="270.2" y="41.2158" width="11.6" height="103.884" fill="#96507c" fill-opacity="0.42"/>
<rect x="289.3" y="79.9474" width="13.4" height="66.0526" rx="1.5" fill="#e25c5e" fill-opacity="0.76" stroke="#b23c3e" stroke-width="1.8"/><rect x="290.2" y="132.789" width="11.6" height="12.3105" fill="#96507c" fill-opacity="0.42"/>
<rect x="309.3" y="27.1053" width="13.4" height="118.895" rx="1.5" fill="#e25c5e" fill-opacity="0.76" stroke="#b23c3e" stroke-width="1.8"/><rect x="310.2" y="53.5263" width="11.6" height="91.5737" fill="#96507c" fill-opacity="0.42"/>
<text class="ax" transform="translate(131.5,163) rotate(90)" text-anchor="middle">1</text><text class="ax" transform="translate(151.5,163) rotate(90)" text-anchor="middle">2</text><text class="ax" transform="translate(171.5,163) rotate(90)" text-anchor="middle">3</text><text class="ax" transform="translate(191.5,163) rotate(90)" text-anchor="middle">4</text><text class="ax" transform="translate(211.5,163) rotate(90)" text-anchor="middle">5</text><text class="ax" transform="translate(231.5,163) rotate(90)" text-anchor="middle">6</text><text class="ax" transform="translate(251.5,163) rotate(90)" text-anchor="middle">7</text><text class="ax" transform="translate(271.5,163) rotate(90)" text-anchor="middle">8</text><text class="ax" transform="translate(291.5,163) rotate(90)" text-anchor="middle">9</text><text class="ax" transform="translate(311.5,163) rotate(90)" text-anchor="middle">10</text>
<rect x="565" y="10" width="100" height="48" fill="#f2f4fc" stroke="#e3e5f2"/>
<text x="615" y="23.6" class="lg" text-anchor="middle">Legend</text><rect x="595" y="27" width="10" height="9.7" fill="#40699f"/><rect x="595" y="39" width="10" height="9.9" fill="#9e3f40"/><text x="614.6" y="36" class="lg">s1</text><text x="614.6" y="48" class="lg">s2</text><rect x="576.3" y="30.3" width="3.4" height="6.4" fill="#f6a8a0" stroke="#dc4a40" stroke-width="0.7"/><rect x="581.4" y="23.3" width="3.4" height="13.4" fill="#d9c2f2" stroke="#9a5cd6" stroke-width="0.7"/><rect x="586.4" y="26.5" width="3.4" height="10.2" fill="#b6d6f0" stroke="#5a90b8" stroke-width="0.7"/><rect x="576.3" y="42.3" width="3.4" height="6.4" fill="#f6a8a0" stroke="#dc4a40" stroke-width="0.7"/><rect x="581.4" y="35.3" width="3.4" height="13.4" fill="#d9c2f2" stroke="#9a5cd6" stroke-width="0.7"/><rect x="586.4" y="38.5" width="3.4" height="10.2" fill="#b6d6f0" stroke="#5a90b8" stroke-width="0.7"/>
<text x="1" y="198" class="ct">3D 100% Stacked Area Chart</text>
</svg>
<!-- ===== Chart Options dialog ===== -->
<div id="dlg">
  <div id="dlgtitle">
    <svg style="left:7px;top:7px" width="17" height="17" viewBox="0 0 17 17">
      <defs><linearGradient id="ib2" x1="0" y1="0" x2="1" y2="1"><stop offset="0" stop-color="#6a9ee8"/><stop offset="1" stop-color="#2f5fb4"/></linearGradient></defs>
      <path d="M0.500 3Q0.500 1.500 2 1.500H11V9H5.500V14.500H3Q0.500 14.500 0.500 12Z" fill="url(#ib2)" stroke="#2c569f" stroke-width="0.600"/>
      <circle cx="12.300" cy="4.200" r="2.100" fill="#a9cdf6" stroke="#4a7fd0" stroke-width="0.700"/><path d="M11 1.600L13.500 3.500" stroke="#2f5fb4" stroke-width="0.800"/>
      <rect x="5.500" y="8.500" width="8.500" height="7.500" fill="#fff" stroke="#8c9cc0" stroke-width="0.700"/>
      <rect x="5.800" y="8.800" width="7.900" height="1.700" fill="#f2c24e"/>
      <path d="M5.800 12.300H13.700M5.800 14.200H13.700M8.500 10.500V15.700M11.200 10.500V15.700" stroke="#a9c4ec" stroke-width="0.700"/>
    </svg>
    <div class="txt">Chart Options</div>
    <div style="left:373px;top:6px;width:21px;height:21px;border:1px solid #fff;border-radius:3px;background:linear-gradient(135deg,#f0a088 0,#e2603c 25%,#d8431c 60%,#c8381a 100%)">
      <svg style="left:3px;top:3px" width="13" height="13" viewBox="0 0 13 13"><path d="M2 2L11 11M11 2L2 11" stroke="#fff" stroke-width="2.200"/></svg>
    </div>
  </div>
  <div id="dlgbody"></div>
</div>

<!-- tabs (page coordinates) -->
<svg style="left:40px;top:64px" width="280" height="28" viewBox="0 0 280 28">
  <defs>
    <linearGradient id="tg" x1="0" y1="0" x2="0" y2="1"><stop offset="0" stop-color="#c9dafa"/><stop offset="1" stop-color="#a9c2f0"/></linearGradient>
    <linearGradient id="og" x1="0" y1="0" x2="0" y2="1"><stop offset="0" stop-color="#fbc77e"/><stop offset="0.5" stop-color="#fdb55c"/><stop offset="1" stop-color="#fcaa4c"/></linearGradient>
  </defs>
  <!-- General -->
  <path d="M5.500 24.500L22 8C25 5 26 4.500 29 4.500H99.500C101.500 4.500 102.500 5.500 102.500 7V24.500Z" fill="url(#tg)" stroke="#3b4ea8"/>
  <!-- Advanced -->
  <path d="M102.500 24.500V9L107 4.500H197L178 24.500Z" fill="url(#tg)" stroke="#3b4ea8"/>
  <!-- Script (selected) -->
  <path d="M178 25L195 7C196.500 5.200 197.500 4.500 200 4.500H262C264 4.500 265.500 5.500 265.500 8V25Z" fill="url(#og)"/>
  <path d="M178 24.500L195 7C196.500 5.200 197.500 4.500 200 4.500H262C264 4.500 265.500 5.500 265.500 8V24.500" fill="none" stroke="#3b4ea8"/>
  <!-- icons -->
  <defs><radialGradient id="gb" cx="0.4" cy="0.35" r="0.7"><stop offset="0" stop-color="#b4e0ac"/><stop offset="0.6" stop-color="#5cb05c"/><stop offset="1" stop-color="#2f8a36"/></radialGradient></defs>
  <path d="M23 5.500H100M108 5.500H195M198 5.500H263" stroke="#fff" stroke-opacity="0.85"/>
  <g>
    <rect x="31.500" y="7.500" width="12" height="9" fill="#fff" stroke="#a07444"/><rect x="32" y="8" width="11" height="2.500" fill="#d6ecfb"/><path d="M32 10.500H43M32 13.500H43M35.500 8V16M39.500 8V16" stroke="#a07444" stroke-width="1"/>
    <circle cx="34" cy="16" r="3.700" fill="url(#gb)" stroke="#3c8a3c" stroke-width="0.500"/>
  </g>
  <g transform="translate(82,0)">
    <rect x="31.500" y="7.500" width="12" height="9" fill="#fff" stroke="#a07444"/><rect x="32" y="8" width="11" height="2.500" fill="#d6ecfb"/><path d="M32 10.500H43M32 13.500H43M35.500 8V16M39.500 8V16" stroke="#a07444" stroke-width="1"/>
    <circle cx="34" cy="16" r="3.700" fill="url(#gb)" stroke="#3c8a3c" stroke-width="0.500"/>
  </g>
  <g>
    <defs><linearGradient id="cy" x1="0" y1="0" x2="1" y2="0"><stop offset="0" stop-color="#e8a818"/><stop offset="0.35" stop-color="#fde46a"/><stop offset="1" stop-color="#e2a21a"/></linearGradient></defs>
    <path d="M203.500 8.500C203.500 6.800 211.500 6.800 211.500 8.500V19C211.500 20.800 203.500 20.800 203.500 19Z" fill="url(#cy)" stroke="#c89018" stroke-width="0.700"/>
    <ellipse cx="207.500" cy="8.500" rx="4" ry="1.300" fill="#f6d048" stroke="#c89018" stroke-width="0.500"/>
    <path d="M208 11.500C208 10.300 208.500 10 209.500 10H214.500C216 10 216 12.500 214.500 12.500H214V18.500C214 20 213 20.500 212 20.500H207C205.500 20.500 205.500 18.500 207 18.500H208Z" fill="#fff" stroke="#5a5638" stroke-width="0.900"/>
    <path d="M209.500 14H212.500M209.500 16.500H210.800M211.800 16.500H212.600" stroke="#4a6ac0" stroke-width="1.100"/>
  </g>
</svg>
<div class="t" style="left:88px;top:71px;color:#1a1030">General</div>
<div class="t" style="left:170px;top:71px;color:#1a1030">Advanced</div>
<div class="t" style="left:261px;top:71px;color:#1a1030">Script</div>

<!-- editor pane inside dialog -->
<div style="left:40px;top:88px;width:372px;height:521px;background:#fdb661;border:1px solid #3b4ea8"></div>
<div style="left:43px;top:91px;width:366px;height:498px;background:#fff"></div>
<div style="left:43px;top:91px;width:27px;height:498px;background:#e9e8e2;border-right:1px solid #c9c8c0"></div>
<div class="vsb" style="left:393px;top:91px;height:498px;background:linear-gradient(to right,#f3f2ed,#fdfdfb)">
  <div class="sbtn" style="top:0"><svg style="left:1.500px;top:4px" width="9" height="6" viewBox="0 0 9 6"><path d="M1 5L4.500 1.500L8 5" stroke="#4d6185" stroke-width="1.800" fill="none"/></svg></div>
  <div class="thumb" style="top:17px;height:238px"></div>
  <div class="sbtn" style="top:480px"><svg style="left:1.500px;top:5px" width="9" height="6" viewBox="0 0 9 6"><path d="M1 1L4.500 4.500L8 1" stroke="#4d6185" stroke-width="1.800" fill="none"/></svg></div>
</div>
<div style="left:43px;top:589px;width:365px;height:17px;background:#ece9d8">
  <div class="sbox" style="left:0;top:0;width:56px;height:17px;border-color:#7d7b6f"><div class="t" style="left:22px;top:1px;font-family:'Liberation Serif',serif;font-size:12px">1:1</div></div>
  <div class="sbox" style="left:59px;top:0;width:27px;height:17px;border-color:#7d7b6f"><div class="t" style="left:4px;top:1px">INS</div></div>
  <div class="sbox" style="left:88px;top:0;width:277px;height:17px;border-color:#7d7b6f"></div>
</div>

<!-- buttons -->
<div class="xbtn" style="left:257px;top:620px;box-shadow:inset 0 0 0 2px #bcd0f4"><u>O</u>K</div>
<div class="xbtn" style="left:338px;top:620px"><u>C</u>ancel</div>
<div id="dlgcode">
<div class="ln" style="top:93px">1</div><div class="cl" style="top:93px">.setResultSettings 'Index=1,</div>
<div class="ln" style="top:110px">2</div><div class="cl" style="top:110px">    CategoryFields="[category]",</div>
<div class="ln" style="top:127px">3</div><div class="cl" style="top:127px">    SeriesFields="[s1],[s2]",</div>
<div class="ln" style="top:144px">4</div><div class="cl" style="top:144px">    ShowChart=true,</div>
<div class="ln" style="top:161px">5</div><div class="cl" style="top:161px">    ShowToolbar=true,</div>
<div class="ln" style="top:178px">6</div><div class="cl" style="top:178px">    Paging=true,</div>
<div class="ln" style="top:195px">7</div><div class="cl" style="top:195px">    Split=300,</div>
<div class="ln" style="top:212px">8</div><div class="cl" style="top:212px">    Chart="{column,column}",</div>
<div class="ln" style="top:229px">9</div><div class="cl" style="top:229px">    RotX=324,</div>
<div class="ln" style="top:246px">10</div><div class="cl" style="top:246px">    RotY=0,</div>
<div class="ln" style="top:263px">11</div><div class="cl" style="top:263px">    RotZ=0,</div>
<div class="ln" style="top:280px">12</div><div class="cl" style="top:280px">    Zoom=40.0,</div>
<div class="ln" style="top:297px">13</div><div class="cl" style="top:297px">    ScaleData=true,</div>
<div class="ln" style="top:314px">14</div><div class="cl" style="top:314px">    ShowLegend=true,</div>
<div class="ln" style="top:331px">15</div><div class="cl" style="top:331px">    ShowGrid=true,</div>
<div class="ln" style="top:348px">16</div><div class="cl" style="top:348px">    Title="3D 100% Stacked Area Chart",</div>
<div class="ln" style="top:365px">17</div><div class="cl" style="top:365px">    PieExplode=0.0,</div>
<div class="ln" style="top:382px">18</div><div class="cl" style="top:382px">    GroupSmallValues=true,</div>
<div class="ln" style="top:399px">19</div><div class="cl" style="top:399px">    SmallValuesThreshold=3.0,</div>
<div class="ln" style="top:416px">20</div><div class="cl" style="top:416px">    PieLabelDistance=3.0,</div>
<div class="ln" style="top:433px">21</div><div class="cl" style="top:433px">    PieShowLines=false,</div>
<div class="ln" style="top:450px">22</div><div class="cl" style="top:450px">    LineWidth=1.0,</div>
<div class="ln" style="top:467px">23</div><div class="cl" style="top:467px">    Width=16.0,</div>
<div class="ln" style="top:484px">24</div><div class="cl" style="top:484px">    Height=10.0,</div>
<div class="ln" style="top:501px">25</div><div class="cl" style="top:501px">    Depth=4.0,</div>
<div class="ln" style="top:518px">26</div><div class="cl" style="top:518px">    SeriesSpacing=0.5,</div>
<div class="ln" style="top:535px">27</div><div class="cl" style="top:535px">    CategorySpacing=0.5,</div>
<div class="ln" style="top:552px">28</div><div class="cl" style="top:552px">    Font="Arial-6",</div>
<div class="ln" style="top:569px">29</div><div class="cl" style="top:569px">    TopColor="#D7DCF5",</div>
</div>
<!-- ===== annotation overlay: ellipse + callout ===== -->
<svg style="left:200px;top:55px" width="360" height="220" viewBox="0 0 360 220">
  <defs>
    <linearGradient id="cg" x1="0" y1="0" x2="0" y2="1"><stop offset="0" stop-color="#d6ecfe" stop-opacity="0.93"/><stop offset="0.35" stop-color="#a4d1fb" stop-opacity="0.95"/><stop offset="0.75" stop-color="#62aff8" stop-opacity="0.97"/><stop offset="1" stop-color="#3d9af6" stop-opacity="0.98"/></linearGradient>
    <linearGradient id="pg" x1="0" y1="0" x2="0" y2="1"><stop offset="0" stop-color="#4a9ef6"/><stop offset="0.5" stop-color="#7dbaf9"/><stop offset="1" stop-color="#b4d8fc"/></linearGradient>
    <linearGradient id="ug" gradientUnits="userSpaceOnUse" x1="0" y1="37" x2="0" y2="196"><stop offset="0" stop-color="#3f98f6" stop-opacity="0.95"/><stop offset="0.4" stop-color="#74b6f9" stop-opacity="0.93"/><stop offset="0.62" stop-color="#aad3fb" stop-opacity="0.92"/><stop offset="0.67" stop-color="#cfe7fe" stop-opacity="0.93"/><stop offset="0.78" stop-color="#a6d2fb" stop-opacity="0.95"/><stop offset="0.92" stop-color="#60aef8" stop-opacity="0.97"/><stop offset="1" stop-color="#3d9af6" stop-opacity="0.98"/></linearGradient>
    <filter id="sh" x="-10%" y="-10%" width="130%" height="140%"><feGaussianBlur stdDeviation="2.500"/></filter>
  </defs>
  <!-- shadows -->
  <rect x="146" y="142" width="180" height="57" rx="7" fill="#000" opacity="0.35" filter="url(#sh)"/>
  <ellipse cx="71" cy="26" rx="45" ry="13.500" fill="none" stroke="#000" stroke-width="2" opacity="0.3" filter="url(#sh)"/>
  <!-- pointer + box as one shape -->
  <path d="M82 42L212 146H240Z" fill="#000" opacity="0.22" filter="url(#sh)"/>
  <path d="M149.500 138.500H206L79 37L83 37L236 138.500H314.500A7 7 0 0 1 321.500 145.500V188.500A7 7 0 0 1 314.500 195.500H149.500A7 7 0 0 1 142.500 188.500V145.500A7 7 0 0 1 149.500 138.500Z" fill="url(#ug)" stroke="#2e8df5" stroke-width="1.800" stroke-linejoin="round"/>
  <!-- ellipse -->
  <ellipse cx="70.200" cy="24" rx="45" ry="13.500" fill="none" stroke="#c00d14" stroke-width="2.200"/>
  <text x="231" y="163" text-anchor="middle" font-family="DejaVu Sans,sans-serif" font-weight="bold" font-size="12" fill="#111" letter-spacing="0.4">Preview the scripts in</text>
  <text x="231" y="179" text-anchor="middle" font-family="DejaVu Sans,sans-serif" font-weight="bold" font-size="12" fill="#111" letter-spacing="0.4">the Chart Scripts Tab</text>
</svg>
</body></html>
